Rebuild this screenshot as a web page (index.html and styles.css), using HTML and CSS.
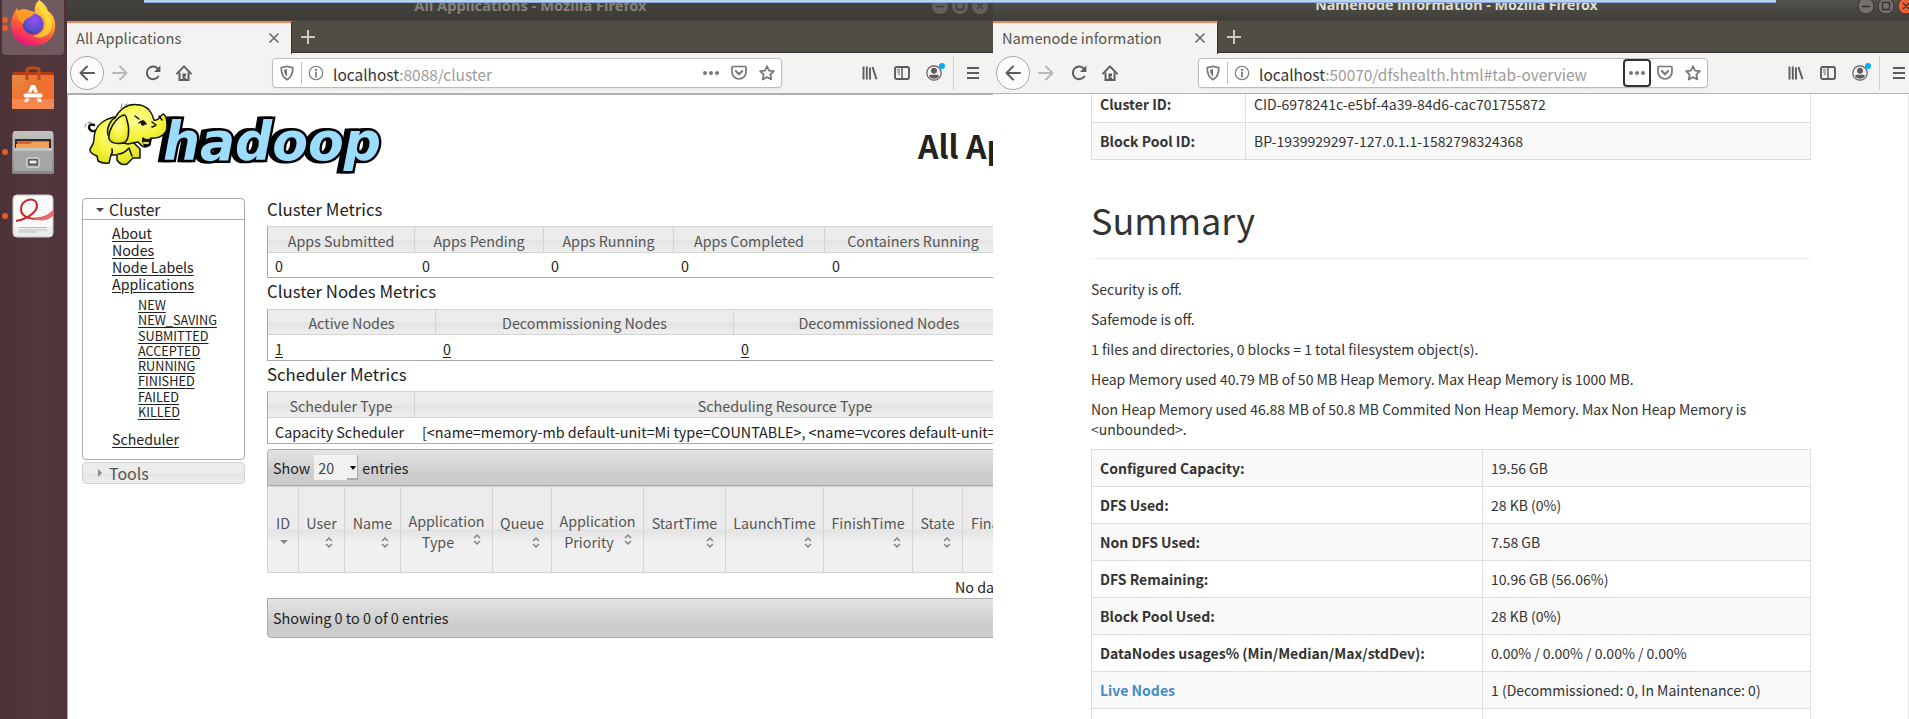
FILE: index.html
```
<!DOCTYPE html>
<html lang="en">
<head>
<meta charset="utf-8">
<title>All Applications</title>
<link rel="stylesheet" href="styles.css">
</head>
<body>
<svg class="defs" width="0" height="0" aria-hidden="true">
  <symbol id="i-close" viewBox="0 0 12 12"><path d="M1.500 1.500l9 9M10.500 1.500l-9 9" fill="none" stroke="#6a6864" stroke-width="1.600"/></symbol>
  <symbol id="i-plus" viewBox="0 0 14 14"><path d="M7 0v14M0 7h14" stroke="#cbc9c4" stroke-width="2"/></symbol>
  <symbol id="i-back" viewBox="0 0 16 16"><path d="M15 8H1.500M8 1.500L1.500 8L8 14.500" fill="none" stroke="currentColor" stroke-width="2" stroke-linecap="round" stroke-linejoin="round"/></symbol>
  <symbol id="i-fwd" viewBox="0 0 16 16"><path d="M1 8h13.500M8 1.500L14.500 8L8 14.500" fill="none" stroke="currentColor" stroke-width="2" stroke-linecap="round" stroke-linejoin="round"/></symbol>
  <symbol id="i-reload" viewBox="0 0 16 16"><path d="M13 3.800A6.300 6.300 0 1 0 13.300 11.500" fill="none" stroke="currentColor" stroke-width="2" stroke-linecap="round"/><path d="M15.400 .6V7H9z" fill="currentColor"/></symbol>
  <symbol id="i-home" viewBox="0 0 16 16"><path d="M1 8.600L8 1.300L15 8.600" fill="none" stroke="currentColor" stroke-width="1.900" stroke-linecap="round" stroke-linejoin="round"/><path d="M3.500 7.500V15h9V7.500" fill="none" stroke="currentColor" stroke-width="2"/><path d="M6.500 8.500h3.500V15H6.500z" fill="currentColor"/><path d="M8.700 11h.9v2h-.9z" fill="#fff"/></symbol>
  <symbol id="i-shield" viewBox="0 0 14 16"><path d="M7 1.200C5 2 3 2.400 1.200 2.500C1.200 8 2 12 7 14.700C12 12 12.800 8 12.800 2.500C11 2.400 9 2 7 1.200z" fill="none" stroke="#777" stroke-width="1.700" stroke-linejoin="round"/><path d="M7 4C6 4.400 5 4.600 4 4.700C4.200 8.200 5 10.300 7 11.800z" fill="#777"/></symbol>
  <symbol id="i-info" viewBox="0 0 16 16"><circle cx="8" cy="8" r="6.700" fill="none" stroke="#777" stroke-width="1.100"/><circle cx="8" cy="4.900" r="1.100" fill="#777"/><path d="M8 7.300v4.500" stroke="#777" stroke-width="1.700" stroke-linecap="round"/></symbol>
  <symbol id="i-dots" viewBox="0 0 16 16"><g fill="#777"><circle cx="2" cy="8" r="2"/><circle cx="8" cy="8" r="2"/><circle cx="14" cy="8" r="2"/></g></symbol>
  <symbol id="i-pocket" viewBox="0 0 16 16"><path d="M2.200 1.500h11.600q1.200 0 1.200 1.200V7a7 7 0 0 1-14 0V2.700q0-1.200 1.200-1.200z" fill="none" stroke="#777" stroke-width="1.700"/><path d="M4.800 6L8 9.200L11.200 6" fill="none" stroke="#777" stroke-width="2" stroke-linecap="round" stroke-linejoin="round"/></symbol>
  <symbol id="i-star" viewBox="0 0 16 16"><path d="M8 1.200l2 4.500l4.900.5l-3.600 3.300l1 5L8 12l-4.300 2.500l1-5L1.100 6.200L6 5.700z" fill="none" stroke="#777" stroke-width="1.700" stroke-linejoin="round"/></symbol>
  <symbol id="i-library" viewBox="0 0 16 16"><path d="M1.500 1.500v13M4.800 1.500v13M8 2.500v12M10.500 2l4 12.200" fill="none" stroke="#5d5c5a" stroke-width="1.900"/></symbol>
  <symbol id="i-side" viewBox="0 0 16 16"><rect x="1" y="2" width="14" height="12" rx="1.800" fill="none" stroke="#5d5c5a" stroke-width="1.900"/><path d="M8 2v12" stroke="#5d5c5a" stroke-width="1.500"/><path d="M3 4.800h3M3 7h3M4 9.200h2" stroke="#5d5c5a"/></symbol>
  <symbol id="i-user" viewBox="0 0 16 16"><circle cx="8" cy="8" r="7.200" fill="none" stroke="#5d5c5a" stroke-width="1.200"/><circle cx="8" cy="5.800" r="3" fill="#5d5c5a"/><path d="M2.800 11C4 9 6 9.800 8 9.800S12 9 13.200 11Q11.500 13.800 8 13.800T2.800 11z" fill="#5d5c5a"/></symbol>
  <symbol id="i-menu" viewBox="0 0 12 14"><path d="M0 2h12M0 7h12M0 12h12" stroke="#5d5c5a" stroke-width="2"/></symbol>
  <symbol id="i-sort" viewBox="0 0 8 11"><path d="M1 4L4 1.200L7 4M1 7L4 9.800L7 7" fill="none" stroke="#888" stroke-width="1.600"/></symbol>
</svg>

<div class="desktop">
  <nav class="dock">
    <div class="tile active">
      <svg width="48" height="48" viewBox="0 0 48 48">
        <defs>
          <linearGradient id="ff" x1=".8" y1="0" x2=".35" y2="1"><stop offset="0" stop-color="#fff04a"/><stop offset=".35" stop-color="#ffb52e"/><stop offset=".65" stop-color="#ff5a34"/><stop offset="1" stop-color="#e6137f"/></linearGradient>
          <radialGradient id="gl" cx=".55" cy=".3" r=".8"><stop offset="0" stop-color="#9a4cf2"/><stop offset=".6" stop-color="#5a4fd0"/><stop offset="1" stop-color="#40309a"/></radialGradient>
        </defs>
        <path d="M30 1C35 4 38 8 39 12C44 15 47 22 46 29C45 40 36 47 24 47C11 47 2 38 2 26C2 19 5 14 8 9Q9 12 10 13C13 9 18 10 21 12Q25 12 26 14C25 8 27 4 30 1z" fill="url(#ff)"/>
        <circle cx="24" cy="25" r="10.500" fill="url(#gl)"/>
        <path d="M8 12C13 9 18 10 21 13L25 15Q22 18 19 19Q15 21 14 25C10 22 8 18 8 12z" fill="#ff9a27"/>
        <path d="M30 1C28 10 34 13 36 20C38 29 32 36 24 37C34 42 44 34 43 24C42 16 34 11 30 1z" fill="#ffe23d" opacity=".75"/>
      </svg>
      <i class="pip pip-a"></i><i class="pip pip-b"></i>
    </div>
    <div class="tile">
      <svg width="44" height="44" viewBox="0 0 44 44">
        <defs><linearGradient id="bag" x1="0" y1="0" x2="1" y2="1"><stop offset="0" stop-color="#e58a45"/><stop offset=".5" stop-color="#ee7130"/><stop offset="1" stop-color="#f0702f"/></linearGradient></defs>
        <path d="M2 6h40l1 5H1z" fill="#b63d12"/><path d="M1 9h42v34H1z" fill="url(#bag)"/><path d="M1 33h42v10H1z" fill="#f58850"/>
        <path d="M16 14V5q0-3 3-3h6q3 0 3 3v9" fill="none" stroke="#c44918" stroke-width="3"/>
        <path d="M20 19h4l7 17h-4L22 23L17 36h-4z" fill="#fff"/><rect x="12" y="27" width="20" height="5" rx="2.500" fill="#fff" stroke="#ed7333"/>
      </svg>
    </div>
    <div class="tile">
      <svg width="44" height="44" viewBox="0 0 44 44">
        <defs><linearGradient id="cab" x1="0" y1="0" x2="0" y2="1"><stop offset="0" stop-color="#c4c4c2"/><stop offset="1" stop-color="#868684"/></linearGradient></defs>
        <path d="M4 1h36q2 0 2.500 3L43 43q0 1-2 1H3q-2 0-2-1L1.500 4Q2 1 4 1z" fill="url(#cab)"/><path d="M4 9h36v9H4z" fill="#2e2b29"/><path d="M6 11h32v8H6z" fill="#d9642a"/><path d="M5 14h14l3-2h16v6H5z" fill="#f1a05a"/>
        <path d="M3 18h38v23H3z" fill="#a5a5a3"/><path d="M3 18h38v3H3z" fill="#c6c6c4"/>
        <rect x="16" y="28" width="12" height="9" rx="1.500" fill="#777" stroke="#d4d4d2" stroke-width="1.500"/><rect x="18" y="30" width="8" height="4" fill="#eee" stroke="#444"/>
      </svg>
      <i class="pip"></i>
    </div>
    <div class="tile">
      <svg width="44" height="44" viewBox="0 0 44 44">
        <rect x="2" y="1" width="40" height="42" rx="4" fill="#ececeb" stroke="#d0cfce"/><rect x="3" y="2" width="38" height="31" rx="3" fill="#f9f9f8"/>
        <path d="M5 27C20 24 29 15 25 8C21 3 11 6 10 14C9 24 24 29 41 20" fill="none" stroke="#c5252b" stroke-width="2"/><path d="M22 24Q33 25 42 16V22Q32 30 22 24z" fill="#e56a6c"/>
        <path d="M8 33.500h28M8 36h28M8 38h18" stroke="#bbb"/>
      </svg>
      <i class="pip"></i>
    </div>
  </nav>

  <section class="window inactive">
    <header class="titlebar"><span class="wtitle">All Applications - Mozilla Firefox</span>
      <span class="ctl"><svg width="60" height="20" viewBox="0 0 60 20"><g fill="#63615c"><circle cx="10" cy="6" r="8"/><circle cx="30" cy="6" r="8"/><circle cx="50" cy="6" r="8"/></g><path d="M6 6.500h8M26.500 2.500h7v7h-7zM47 3l6 6M53 3l-6 6" fill="none" stroke="#3b3a36" stroke-width="1.300"/></svg></span></header>
    <div class="tabs"><div class="tab"><span>All Applications</span><svg width="12" height="12"><use href="#i-close"/></svg></div><svg class="plus" width="14" height="14"><use href="#i-plus"/></svg></div>
    <div class="toolbar">
      <span class="back"><svg width="16" height="16"><use href="#i-back"/></svg></span>
      <svg class="fwd" width="16" height="16"><use href="#i-fwd"/></svg><svg class="reload" width="16" height="16"><use href="#i-reload"/></svg><svg class="home" width="16" height="16"><use href="#i-home"/></svg>
      <div class="url"><svg width="14" height="16"><use href="#i-shield"/></svg><i class="bar"></i><svg class="info" width="16" height="16"><use href="#i-info"/></svg><span class="addr"><b>localhost</b>:8088/cluster</span>
        <span class="more"><svg width="16" height="16"><use href="#i-dots"/></svg></span><svg class="pocket" width="16" height="16"><use href="#i-pocket"/></svg><svg class="star" width="16" height="16"><use href="#i-star"/></svg></div>
      <div class="tools"><svg width="16" height="16"><use href="#i-library"/></svg><svg width="16" height="16"><use href="#i-side"/></svg><span class="user"><svg width="16" height="16"><use href="#i-user"/></svg><i></i></span></div>
      <div class="menu"><svg width="12" height="14"><use href="#i-menu"/></svg></div>
    </div>
    <div class="page yarn">
      <div class="banner">
        <svg class="logo" width="304" height="80" viewBox="80 98 304 80">
          <defs><radialGradient id="el" cx=".5" cy=".35" r=".65"><stop offset="0" stop-color="#ffff9a"/><stop offset=".6" stop-color="#f5f53f"/><stop offset="1" stop-color="#dfe01c"/></radialGradient></defs>
          <text class="word" font-size="53" x="163" y="160" textLength="218" lengthAdjust="spacingAndGlyphs">hadoop</text>
          <g stroke="#111" stroke-width="1.500" stroke-linejoin="round" stroke-linecap="round">
            <path d="M97 130Q91 133 89 128Q89 123 94 125" fill="none" stroke-width="2.500"/>
            <path d="M115 117C105 119 94 125 94 139C94 144 92 146 90 149Q89 153 97 156L98 161Q103 164 109 163L111 155L117 155L117 160Q121 166 127 164L133 158L140 158L140 149L133 142Z" fill="url(#el)"/>
            <path d="M118 154Q124 154 129 148L132 156M111 155Q113 153 112 149" fill="none"/>
            <path d="M115 118C121 107 130 103 140 105C149 107 152 113 154 120C158 122 159 117 163 114Q167 115 167 126C167 134 160 139 151 138L150 145Q144 150 138 142L128 144Q112 142 108 135Q106 128 112 120z" fill="url(#el)"/>
            <path d="M124 115C116 117 108 130 109 139Q112 145 123 143C129 142 130 130 127 120Q126 115 124 115z" fill="url(#el)"/>
            <path d="M143 138Q146 141 151 139Q150 147 145 146Q142 142 143 138z" fill="#222"/><path d="M144 143l4 0" stroke="#dd7" stroke-width="2"/>
            <path d="M139 123Q143 119 146 124M135 116l4 3M152 122l4 3M152 127l3-1M159 116l3 4" fill="none"/><ellipse cx="143" cy="123" rx="1.500" ry="2" fill="#111"/>
            <path d="M121 108l1-4M125 105l2-1M85 127l1-3M88 123l3-1" fill="none" stroke="#777" stroke-width="1"/>
          </g>
        </svg>
        <h1>All Applications</h1>
      </div>
      <div class="cols">
        <aside>
          <div class="acc open"><h3><i class="tri down"></i>Cluster</h3>
            <ul><li><a>About</a></li><li><a>Nodes</a></li><li><a>Node Labels</a></li><li><a>Applications</a>
              <ul class="sub"><li><a>NEW</a></li><li><a>NEW_SAVING</a></li><li><a>SUBMITTED</a></li><li><a>ACCEPTED</a></li><li><a>RUNNING</a></li><li><a>FINISHED</a></li><li><a>FAILED</a></li><li><a>KILLED</a></li></ul></li><li><a>Scheduler</a></li></ul></div>
          <div class="acc closed"><h3><i class="tri right"></i>Tools</h3></div>
        </aside>
        <main>
          <h2 class="first">Cluster Metrics</h2>
          <div class="grid m1"><b>Apps Submitted</b><b>Apps Pending</b><b>Apps Running</b><b>Apps Completed</b><b>Containers Running</b><span>0</span><span>0</span><span>0</span><span>0</span><span>0</span></div>
          <h2>Cluster Nodes Metrics</h2>
          <div class="grid m2"><b>Active Nodes</b><b>Decommissioning Nodes</b><b>Decommissioned Nodes</b><span><a>1</a></span><span><a>0</a></span><span><a>0</a></span></div>
          <h2>Scheduler Metrics</h2>
          <div class="grid m3"><b>Scheduler Type</b><b>Scheduling Resource Type</b><span>Capacity Scheduler</span><span>[&lt;name=memory-mb default-unit=Mi type=COUNTABLE&gt;, &lt;name=vcores default-unit=</span></div>
          <div class="strip top">Show <span class="select">20<i></i></span> entries</div>
          <div class="apps">
            <div class="asc"><span>ID</span><i class="tri down"></i></div>
            <div><span>User</span><svg width="8" height="11"><use href="#i-sort"/></svg></div>
            <div><span>Name</span><svg width="8" height="11"><use href="#i-sort"/></svg></div>
            <div class="two"><span>Application</span><span class="l2">Type</span><svg width="8" height="11"><use href="#i-sort"/></svg></div>
            <div><span>Queue</span><svg width="8" height="11"><use href="#i-sort"/></svg></div>
            <div class="two"><span>Application</span><span class="l2">Priority</span><svg width="8" height="11"><use href="#i-sort"/></svg></div>
            <div><span>StartTime</span><svg width="8" height="11"><use href="#i-sort"/></svg></div>
            <div><span>LaunchTime</span><svg width="8" height="11"><use href="#i-sort"/></svg></div>
            <div><span>FinishTime</span><svg width="8" height="11"><use href="#i-sort"/></svg></div>
            <div><span>State</span><svg width="8" height="11"><use href="#i-sort"/></svg></div>
            <div class="final"><span>FinalStatus</span></div>
          </div>
          <div class="empty">No data available in table</div>
          <div class="strip bottom">Showing 0 to 0 of 0 entries</div>
        </main>
      </div>
    </div>
  </section>

  <section class="window focused">
    <header class="titlebar"><span class="wtitle">Namenode information - Mozilla Firefox</span>
      <span class="ctl"><svg width="60" height="20" viewBox="0 0 60 20"><g fill="#74716a" stroke="#34322e"><circle cx="10" cy="6" r="8"/><circle cx="30" cy="6" r="8"/><circle cx="50" cy="6" r="8" fill="#ee6134"/></g><path d="M6 6.500h8M26.500 2.500h7v7h-7zM47 3l6 6M53 3l-6 6" fill="none" stroke="#33312d" stroke-width="1.300"/></svg></span></header>
    <div class="tabs"><div class="tab"><span>Namenode information</span><svg width="12" height="12"><use href="#i-close"/></svg></div><svg class="plus" width="14" height="14"><use href="#i-plus"/></svg></div>
    <div class="toolbar">
      <span class="back"><svg width="16" height="16"><use href="#i-back"/></svg></span>
      <svg class="fwd" width="16" height="16"><use href="#i-fwd"/></svg><svg class="reload" width="16" height="16"><use href="#i-reload"/></svg><svg class="home" width="16" height="16"><use href="#i-home"/></svg>
      <div class="url"><svg width="14" height="16"><use href="#i-shield"/></svg><i class="bar"></i><svg class="info" width="16" height="16"><use href="#i-info"/></svg><span class="addr"><b>localhost</b>:50070/dfshealth.html#tab-overview</span>
        <span class="more ring"><svg width="16" height="16"><use href="#i-dots"/></svg></span><svg class="pocket" width="16" height="16"><use href="#i-pocket"/></svg><svg class="star" width="16" height="16"><use href="#i-star"/></svg></div>
      <div class="tools"><svg width="16" height="16"><use href="#i-library"/></svg><svg width="16" height="16"><use href="#i-side"/></svg><span class="user"><svg width="16" height="16"><use href="#i-user"/></svg><i></i></span></div>
      <div class="menu"><svg width="12" height="14"><use href="#i-menu"/></svg></div>
    </div>
    <div class="page dfs">
      <div class="container">
        <dl class="kv ids"><dt>Cluster ID:</dt><dd>CID-6978241c-e5bf-4a39-84d6-cac701755872</dd><dt>Block Pool ID:</dt><dd>BP-1939929297-127.0.1.1-1582798324368</dd></dl>
        <h1>Summary</h1>
        <p>Security is off.</p><p>Safemode is off.</p><p>1 files and directories, 0 blocks = 1 total filesystem object(s).</p>
        <p>Heap Memory used 40.79 MB of 50 MB Heap Memory. Max Heap Memory is 1000 MB.</p>
        <p>Non Heap Memory used 46.88 MB of 50.8 MB Commited Non Heap Memory. Max Non Heap Memory is<br>&lt;unbounded&gt;.</p>
        <dl class="kv stats"><dt>Configured Capacity:</dt><dd>19.56 GB</dd><dt>DFS Used:</dt><dd>28 KB (0%)</dd><dt>Non DFS Used:</dt><dd>7.58 GB</dd><dt>DFS Remaining:</dt><dd>10.96 GB (56.06%)</dd><dt>Block Pool Used:</dt><dd>28 KB (0%)</dd><dt>DataNodes usages% (Min/Median/Max/stdDev):</dt><dd>0.00% / 0.00% / 0.00% / 0.00%</dd><dt><a>Live Nodes</a></dt><dd>1 (Decommissioned: 0, In Maintenance: 0)</dd><dt></dt><dd></dd></dl>
      </div>
    </div>
  </section>
  <div class="overlay-edge"></div>
</div>
</body>
</html>
```
FILE: styles.css
```
* { box-sizing: border-box; }
body { margin: 0; font-family: "Noto Sans CJK SC", "Noto Sans", sans-serif; }
h1, h2, h3, p, ul, dl, dd { margin: 0; padding: 0; font-weight: 400; }
ul { list-style: none; }
svg { display: block; flex: none; }
.defs { position: absolute; }
.desktop { position: relative; display: flex; width: 1909px; height: 719px; overflow: hidden; background: #fff; }

/* launcher */
.dock { flex: none; width: 67px; background: linear-gradient(90deg, #4b3237, #52383d 60%, #4d3339); display: flex; flex-direction: column; align-items: flex-start; }
.tile { position: relative; flex: none; width: 66px; height: 64px; display: flex; align-items: center; justify-content: center; }
.tile.active { width: 62px; height: 55px; padding-bottom: 9px; margin: 0 0 1px 2px; background: #70595f; border-radius: 0 0 4px 4px; }
.tile + .tile svg { margin-top: -1px; }
.pip { position: absolute; left: 2px; top: 29px; width: 6px; height: 6px; border-radius: 3px; background: #ec5a29; }
.pip-a { left: 0; top: 17px; }
.pip-b { left: 0; top: 25px; }

/* browser windows */
.window { position: relative; flex: none; display: flex; flex-direction: column; height: 719px; overflow: hidden; background: #fff; }
.inactive { width: 926px; }
.focused { width: 916px; }
.titlebar { position: relative; flex: none; height: 20px; overflow: hidden; display: flex; background: linear-gradient(#45433e, #3c3b37); text-align: center; }
.wtitle { flex: none; width: 927px; font: 700 14.700px/20px "Noto Sans", sans-serif; color: #85827b; margin-top: -5px; }
.focused .wtitle { color: #dfdbd2; font-size: 14.250px; }
.focused .titlebar { background: linear-gradient(#53514a, #403e39); }
.ctl { position: absolute; left: 863px; top: 0; }
.tabs { flex: none; height: 33px; background: #504d45; border-top: 1px solid #45423c; border-bottom: 1px solid #36342f; display: flex; align-items: center; }
.tab { width: 225px; height: 33px; align-self: flex-start; background: #f4f3f2; border-top: 2px solid #f08357; border-right: 1px solid #36342f; display: flex; align-items: center; justify-content: space-between; padding: 0 11px 2px 9px; font-size: 14.650px; line-height: 22px; color: #57554f; position: relative; z-index: 1; }
.plus { margin-left: 9px; }
.toolbar { flex: none; height: 41px; background: #f4f3f2; border-bottom: 1px solid #b5b3b0; display: flex; align-items: center; color: #5d5c5a; }
.back { width: 34px; height: 34px; margin-left: 3px; border: 1px solid #aaa8a6; border-radius: 50%; background: #fcfcfc; display: flex; align-items: center; justify-content: center; }
.fwd { margin-left: 8px; color: #b9b8b6; }
.reload { margin-left: 17px; }
.home { margin-left: 15px; }
.url { width: 510px; height: 30px; margin-left: 80px; background: #fff; border: 1px solid #bdbbb8; border-radius: 4px; display: flex; align-items: center; padding-left: 7px; box-shadow: 0 1px 2px #0001; }
.bar { width: 1px; height: 22px; margin-left: 7px; background: #bbb; }
.info { margin-left: 6px; }
.addr { margin-left: 9px; flex: 1; font-size: 15.450px; line-height: 28px; color: #9c9c9c; white-space: nowrap; padding-top: 1px; }
.addr b { font-weight: 400; color: #333; }
.more { width: 28px; height: 28px; display: flex; align-items: center; justify-content: center; }
.ring { border: 2px solid #333; border-radius: 4px; }
.pocket { margin-left: 6px; }
.star { margin: 0 6px 0 12px; }
.tools { display: flex; gap: 16px; margin-left: 80px; }
.user { position: relative; }
.user i { position: absolute; right: -3px; top: -2px; width: 6px; height: 6px; border-radius: 50%; background: #00aeff; }
.menu { margin-left: 11px; height: 34px; border-left: 1px solid #d2d0ce; padding-left: 13px; display: flex; align-items: center; }
.page { flex: 1; min-height: 0; overflow: hidden; }
.overlay-edge { position: absolute; left: 144px; top: 0; width: 1632px; height: 3px; background: #bcd2ec; border-bottom: 1px solid #88a9d3; }

/* cluster page */
.yarn { border-left: 1px solid #aaa; border-top: 1px solid #aaa; color: #222; font-size: 14.300px; }
.banner { display: flex; height: 103px; align-items: flex-start; padding: 3px 0 0 12px; }
.banner h1 { margin: 23px 0 0 534px; font-size: 32px; line-height: 48px; font-weight: 700; white-space: nowrap; }
.word { font-family: "DejaVu Sans", sans-serif; font-weight: 700; font-style: italic; fill: #9cdcff; stroke: #000; stroke-width: 5px; stroke-linejoin: miter; paint-order: stroke; filter: drop-shadow(-4px 0 0 #000); }
.cols { display: flex; gap: 22px; padding-left: 14px; }
aside { flex: none; width: 163px; }
.acc { border: 1px solid #aaa; border-radius: 4px; }
.acc h3 { display: flex; align-items: center; height: 20px; font-size: 15.700px; line-height: 20px; padding-left: 13px; }
.tri { width: 0; height: 0; border: 4px solid transparent; }
.tri.down { border-top-color: #444; border-bottom-width: 0; }
.tri.right { border-left-color: #888; border-right-width: 0; margin: 0 2px; }
.acc .tri { margin-right: 5px; }
.acc .tri.right { margin-right: 7px; }
.open { height: 262px; }
.open h3 { height: 21px; line-height: 22px; padding-top: 1px; border-bottom: 1px solid #aaa; }
.open > ul { padding: 5px 0 0 29px; line-height: 17px; font-size: 14.200px; }
.sub { padding: 4px 0 12px 26px; font-size: 12.700px; line-height: 15.300px; }
a { text-decoration: underline; text-underline-offset: 2px; }
.closed { margin-top: 2px; height: 22px; border-color: #d3d3d3; background: linear-gradient(#ececec 50%, #e3e3e3 50%, #eee); color: #555; }
.closed h3 { font-size: 16px; }
main { flex: none; width: 1500px; }
h2 { font-size: 16.800px; line-height: 20px; height: 28px; }
.first { padding-top: 1px; }
.grid { display: grid; border-left: 1px solid #aaa; border-bottom: 1px solid #aaa; margin-bottom: 3px; white-space: nowrap; grid-template-rows: 27px 24px; }
.grid b { font-weight: 400; color: #555; text-align: center; height: 27px; border: 1px solid #d3d3d3; border-left: 0; background: linear-gradient(#ececec 50%, #e3e3e3 50%, #eee); line-height: 28px; }
.grid span { padding: 2px 0 0 7px; line-height: 22px; }
.m1 { grid-template-columns: 147px 129px 130px 151px 177px; }
.m2 { grid-template-columns: 168px 298px 291px; grid-template-rows: 26px 25px; }
.m2 b { height: 26px; line-height: 26px; }
.grid.m2 span, .grid.m3 span { padding-top: 3px; }
.m3 { grid-template-columns: 147px 741px; grid-template-rows: 27px 25px; margin-bottom: 5px; }
.m2 + h2 { height: 27px; }
.m3 span { font-size: 14.350px; }
.strip { border: 1px solid #aaa; background: linear-gradient(#e4e4e4, #ccc 70%); display: flex; align-items: center; padding-left: 5px; gap: 4px; }
.top { height: 37px; border-radius: 4px 0 0 0; }
.select { position: relative; width: 44px; height: 25px; line-height: 25px; padding-left: 4px; background: #f2f1f0; color: #444; box-shadow: inset -1px 0 #aaa; }
.select i { position: absolute; right: 2px; top: 11px; border: 3px solid transparent; border-top: 4px solid #000; border-bottom: 0; }
.select::after { content: ""; position: absolute; right: 0; bottom: 0; width: 11px; height: 2px; background: #aaa; }
.apps { display: grid; grid-template-columns: 31px 46px 56px 92px 59px 92px 82px 98px 89px 50px 100px; height: 87px; border-left: 1px solid #d3d3d3; }
.apps > div { position: relative; border: 1px solid #d3d3d3; border-left: 0; background: linear-gradient(#ececec 50%, #e3e3e3 50%, #f0f0f0 66%); color: #555; text-align: center; padding-top: 26px; line-height: 20px; }
.apps .two { padding-top: 23px; line-height: 21px; }
.apps .final { text-align: left; padding-left: 8px; }
.two span { display: block; }
.two .l2 { padding-right: 17px; }
.apps svg { position: absolute; right: 11px; top: 50px; }
.apps .two svg { top: 47px; }
.apps .tri { position: absolute; left: 12px; top: 53px; border-top-color: #888; }
.empty { height: 25px; line-height: 27px; padding-left: 688px; }
.bottom { height: 40px; border-radius: 0 0 0 4px; padding-bottom: 1px; font-size: 14.400px; }

/* namenode page */
.dfs { color: #333; font-size: 14px; line-height: 20px; border-right: 1px solid #e4e4e4; }
.container { width: 720px; margin: -9px 0 0 98px; }
.kv { display: grid; border: 1px solid #ddd; border-width: 1px 0 0 1px; }
.ids { grid-template-columns: 154px 565px; }
.stats { grid-template-columns: 391px 328px; }
.kv dt, .kv dd { height: 37px; padding: 8px; border: 1px solid #ddd; border-width: 0 1px 1px 0; }
.kv dt { font-weight: 700; }
.stats > :nth-child(4n+1), .stats > :nth-child(4n+2), .ids > :nth-child(4n+3), .ids > :nth-child(4n+4) { background: #f9f9f9; }
.dfs h1 { margin: 39px 0 20px; font-size: 36px; line-height: 40px; padding-bottom: 19px; border-bottom: 1px solid #eee; }
.dfs p { margin-bottom: 10px; white-space: nowrap; }
.stats a { color: #428bca; text-decoration: none; }
```
